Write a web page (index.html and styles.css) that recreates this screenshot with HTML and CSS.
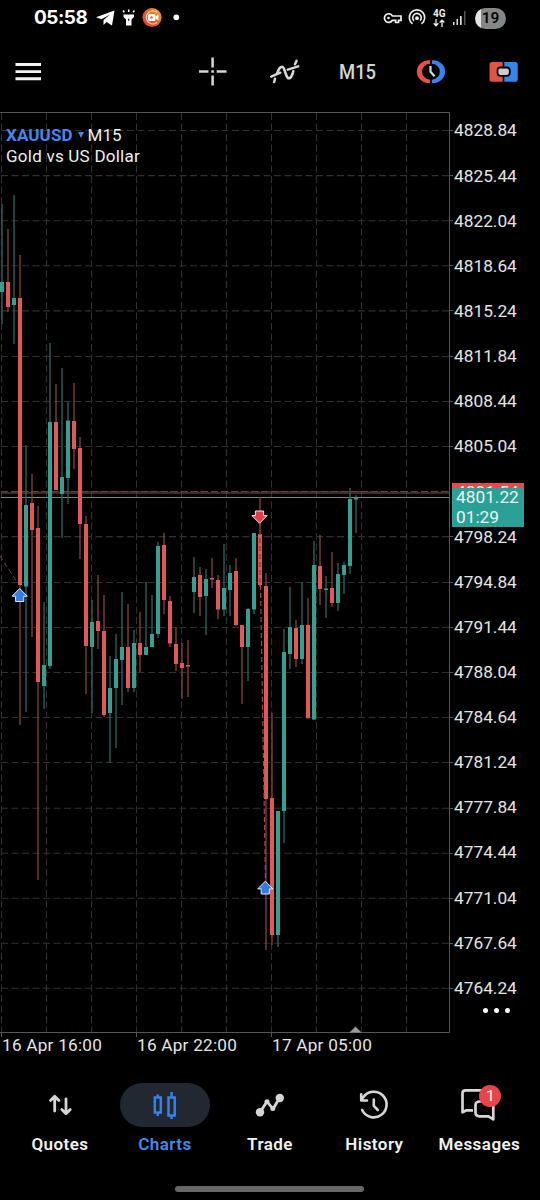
FILE: index.html
```html
<!DOCTYPE html>
<html lang="en">
<head>
<meta charset="utf-8">
<title>XAUUSD M15</title>
<link rel="stylesheet" href="styles.css">
</head>
<body>
<div class="app">
  <header class="status">
    <span class="clock">05:58</span>
    <svg class="status-left" width="90" height="36" viewBox="93 0 90 36">
      <path d="M96 17.3 114.5 10.5 112 25.5 106.5 22 103.5 25V20L110 14.5 101.5 19.3Z" fill="#fff"/>
      <path d="M123.500 14.500H134V17L131.500 19.500V25.500H126V19.500L123.500 17Z" fill="#fff"/>
      <path d="M128.700 9.500V12M123 10.500 124.300 12.300M134.400 10.500 133.100 12.300" stroke="#fff" stroke-width="1.500"/>
      <path d="M128.700 18.800V20.800" stroke="#000" stroke-width="1.200"/>
      <defs><linearGradient id="rec" x1="0" y1="1" x2="1" y2="0"><stop offset="0" stop-color="#e93427"/><stop offset=".5" stop-color="#ec6129"/><stop offset="1" stop-color="#e8b52c"/></linearGradient></defs>
      <circle cx="152" cy="17.500" r="9.600" fill="url(#rec)"/>
      <path d="M157 12.500A6.500 6.500 0 1 0 157 22.500" fill="none" stroke="#ffd9bd" stroke-width="1.200"/>
      <rect x="148" y="14" width="7.500" height="7" rx="1.500" fill="#fff"/>
      <path d="M155.500 16.500 158.500 14.500V20.500L155.500 18.500Z" fill="#fff"/>
      <circle cx="151.500" cy="17.500" r="1.300" fill="#ec6129"/>
      <circle cx="176.300" cy="17.300" r="2.900" fill="#fff"/>
    </svg>
    <div class="status-right">
      <svg width="44" height="36" viewBox="383 0 44 36" fill="none" stroke="#eee">
        <path d="M392.500 16H401V20.300H398.500V22.500H395.700V20.300H392.400A4.300 4.300 0 1 1 392.500 16Z" stroke-width="1.700"/>
        <circle cx="388.500" cy="18" r="1.300" fill="#eee" stroke="none"/>
        <path d="M412.500 23.800A7.700 7.700 0 1 1 421.500 23.800M414 20.800A4.300 4.300 0 1 1 420 20.800" stroke-width="1.600"/>
        <circle cx="417" cy="18.200" r="1.900" fill="#eee" stroke="none"/>
      </svg>
      <div class="net"><span>4G</span>
        <svg width="12" height="8" viewBox="0 0 12 8" fill="none" stroke="#eee" stroke-width="1.300"><path d="M3 0V6.500M.700 4.300 3 6.700 5.300 4.300M9 8V1.200M6.700 3.500 9 1.100 11.300 3.500"/></svg>
      </div>
      <svg width="15" height="16" viewBox="0 0 15 16"><path d="M1 12H2.500V15H1ZM4.500 9H6V15H4.500ZM8 6H9.700V15H8Z" fill="#ddd"/><path d="M12 1H13.500V15H12Z" fill="#555"/></svg>
      <span class="battery">19</span>
    </div>
  </header>

  <nav class="toolbar">
    <svg width="540" height="76" viewBox="0 36 540 76" class="tool-icons">
      <path d="M15.500 64.500H41M15.500 71.600H41M15.500 78.700H41" stroke="#f4f4f4" stroke-width="2.900"/>
      <path d="M212.600 57.500V67.500M212.600 75.500V85.500M199 71.500H208.500M216.700 71.500H226.500M211.300 71.500H213.900" stroke="#d8d8d8" stroke-width="2.500"/>
      <g fill="none" stroke="#d8d8d8" stroke-width="2.500" stroke-linecap="round">
        <path d="M271.200 76.600 280.300 72.700M287.800 69.600 298.200 66.400"/>
        <path d="M274.200 82 275 78.700M277 73.800C279.300 67 282.500 64.300 284.300 69.500L286 74.500C287.800 80 290.500 79.400 292.500 74L293.300 71.200M295 64.300 296.600 60.800"/>
      </g>
      <path d="M430.100 60.200H429A12.200 11.500 0 0 0 429 83.200H430.100V79.700A8 8 0 0 1 430.100 63.700Z" fill="#e25345"/>
      <path d="M431.800 60.200H432.900A12.200 11.500 0 0 1 432.900 83.200H431.800V79.700A8 8 0 0 0 431.800 63.700Z" fill="#3585ed"/>
      <path d="M430.500 66V71.800L434.600 76.200" fill="none" stroke="#d8d8d8" stroke-width="2.200"/>
      <path d="M492 62H502.700V81.800H492Q489.500 81.800 489.500 79.300V64.500Q489.500 62 492 62Z" fill="#e25345"/>
      <path d="M504.300 62H515.200Q517.700 62 517.700 64.500V79.300Q517.700 81.800 515.200 81.800H504.300Z" fill="#3585ed"/>
      <rect x="497.500" y="67.500" width="12.300" height="8.300" rx="3" fill="#ccc" stroke="#050505" stroke-width="1.800"/>
    </svg>
    <span class="period">M15</span>
  </nav>

  <main class="chart">
    <svg class="plot" width="453" height="926" viewBox="0 112 453 926">
      <g fill="none" stroke="#303030" stroke-width="1.100" stroke-dasharray="7 3.500">
        <path d="M1.500 113V1032M46.500 113V1032M91.500 113V1032M136.500 113V1032M181.500 113V1032M226.500 113V1032M271.500 113V1032M316.500 113V1032M361.500 113V1032M406.500 113V1032"/>
        <path d="M1 130.500H449M1 175.600H449M1 220.700H449M1 265.800H449M1 310.900H449M1 356.500H449M1 401.500H449M1 446.500H449M1 491.500H449M1 536.600H449M1 582.500H449M1 627.500H449M1 672.500H449M1 717.500H449M1 762.500H449M1 808.200H449M1 853.300H449M1 898.200H449M1 943.200H449M1 988.200H449"/>
      </g>
      <path d="M0 112.500H449.500V1032.500H0M1.500 1032V1037M136.500 1032V1037M271.500 1032V1037M449 130.500H453M449 175.500H453M449 220.500H453M449 265.500H453M449 310.500H453M449 356.500H453M449 401.500H453M449 446.500H453M449 536.500H453M449 582.500H453M449 627.500H453M449 672.500H453M449 717.500H453M449 762.500H453M449 808.500H453M449 853.500H453M449 898.500H453M449 943.500H453M449 988.500H453" fill="none" stroke="#565656"/>
      <path d="M349.500 1032.500 355.500 1026.500 361.500 1032.500Z" fill="#999"/>

      <!-- ask and bid levels -->
      <path d="M1 493H449" stroke="#8a4f49" stroke-width="1.200"/>
      <path d="M1 491.500H449" stroke="#65433f" stroke-dasharray="7 3"/>
      <path d="M1 497.500H449" stroke="#6f8d85" stroke-width="1"/>

      <!-- wicks -->
      <path fill="none" stroke="#2b685f" stroke-width="1.300" d="M2 204V324M14 195V344M26 445V712M44 602V709M50 343V669M62 368V538M68 402V504M92 600V713M110 656V763M116 634V748M122 592V705M134 630V692M146 582V655M152 595V647M158 542V638M194 557V613M206 569V635M224 544V616M230 565V616M248 608V681M254 533V614M278 811V947M284 629V843M290 587V669M302 582V664M314 541V720M326 576V618M338 563V611M344 562V594M350 488V574M356 495V533"/>
      <path fill="none" stroke="#84433e" stroke-width="1.300" d="M8 229V312M20 255V725M32 474V637M38 506V880M56 384V490M74 383V469M80 437V559M86 516V694M98 575V649M104 595V717M128 604V692M140 612V672M164 533V614M170 596V647M176 627V671M182 643V699M188 640V697M200 567V616M212 558V588M218 575V619M236 558V626M242 625V704M260 497V587M266 573V950M272 713V945M296 620V667M308 598V719M320 535V605M332 552V607"/>
      <!-- bodies -->
      <path fill="none" stroke="#35a092" stroke-width="4" d="M2 282V292M14 298V305M26 505V586.500M44 665V686M50 422V666M62 477V494M68 420.500V478M92 622V647M110 688V713M116 659V688M122 647V660M134 643V688M146 647V655M152 634V647M158 546V634M194 577V592M206 579V596M224 588V609.500M230 573V590M248 609V647M254 533V609.500M278 811V935M284 652V811M290 627V654M302 625V659M314 565V719.500M326 588.500V590M338 574V603M344 565V575M350 499V566M356 497V499.500"/>
      <path fill="none" stroke="#e2585a" stroke-width="4" d="M8 282V307M20 298V585M32 503V530M38 528V682M56 422V490M74 421V449M80 448V524M86 524V646M98 621V631M104 631V715M128 647V688M140 643V655M164 545V600M170 601V643.500M176 644V664M182 663V668M188 665V666.500M200 575V597M212 578V579.500M218 580V609.500M236 571V625M242 625V647M260 534V585M266 586V799M272 798V935M296 628V659M308 625V718M320 566V589M332 588V603"/>

      <!-- deals -->
      <path d="M0 556 17 582" stroke="#74463e" stroke-dasharray="5 3" fill="none"/>
      <path d="M260 522V585" stroke="#8f3436" stroke-width="1.200" stroke-dasharray="5 3"/>
      <path d="M260.500 585 265.500 882" stroke="#a04a43" stroke-width="1.200" stroke-dasharray="5 3"/>
      <g stroke="#e6edf8" stroke-width="1" stroke-linejoin="round">
        <path d="M19.700 588.500 27.300 596.200H23.800V601.500H15.600V596.200H12.100Z" fill="#347bea"/>
        <path d="M265.300 881.200 272.900 888.900H269.400V894H261.200V888.900H257.700Z" fill="#347bea"/>
        <path d="M259.500 523.200 251.900 515.600H255.400V511H263.600V515.600H267.100Z" fill="#e53e46"/>
      </g>
    </svg>
    <div class="prices">
      <span>4828.84</span><span>4825.44</span><span>4822.04</span><span>4818.64</span><span>4815.24</span><span>4811.84</span><span>4808.44</span><span>4805.04</span><span></span><span>4798.24</span><span>4794.84</span><span>4791.44</span><span>4788.04</span><span>4784.64</span><span>4781.24</span><span>4777.84</span><span>4774.44</span><span>4771.04</span><span>4767.64</span><span>4764.24</span>
      <div class="more"><i></i><i></i><i></i></div>
    </div>
    <div class="symbol">
      <div><b>XAUUSD</b><i class="caret"></i>M15</div>
      <div class="name">Gold vs US Dollar</div>
    </div>
    <div class="ask">4801.54</div>
    <div class="bid">4801.22<br>01:29</div>
  </main>
  <div class="times"><span>16 Apr 16:00</span><span>16 Apr 22:00</span><span>17 Apr 05:00</span></div>

  <footer class="tabs">
    <div class="tab"><div class="pill">
      <svg width="50" height="44" viewBox="35 1083 50 44" fill="none" stroke="#d6d6d6" stroke-width="2.800" stroke-linecap="round" stroke-linejoin="round"><path d="M54.700 1111V1096.500M50.500 1100.500 54.700 1096.300 58.900 1100.500M66 1099V1113M61.800 1109.500 66 1113.700 70.200 1109.500"/></svg>
    </div>Quotes</div>
    <div class="tab active"><div class="pill">
      <svg width="50" height="44" viewBox="140.500 1083 50 44" fill="none" stroke="#3681ee" stroke-width="2.500"><path d="M155.300 1097.500H161.300V1112.500H155.300ZM158.300 1094.500V1097M158.300 1113V1116M169 1097.500H175.200V1115.500H169ZM172.100 1092V1097M172.100 1116V1119"/></svg>
    </div>Charts</div>
    <div class="tab"><div class="pill">
      <svg width="50" height="44" viewBox="245.500 1083 50 44" fill="none" stroke="#d6d6d6" stroke-width="2.800"><path d="M260.500 1112.300 267.500 1101.500 273.500 1109 280.300 1097.500" stroke-linejoin="round"/><g fill="#d6d6d6" stroke="none"><circle cx="260.500" cy="1112.300" r="4.200"/><circle cx="267.500" cy="1101.800" r="2.500"/><circle cx="273.300" cy="1108.500" r="2.500"/><circle cx="280.300" cy="1098" r="4.200"/></g></svg>
    </div>Trade</div>
    <div class="tab"><div class="pill">
      <svg width="50" height="44" viewBox="349.500 1083 50 44" fill="none" stroke="#d6d6d6" stroke-width="2.600" stroke-linecap="round" stroke-linejoin="round"><path d="M362.700 1110A12.800 12.800 0 1 0 363.800 1097.200L361.700 1100M361.700 1094.300V1100.500H367.500M374.300 1099.500V1105.800L378.300 1110"/></svg>
    </div>History</div>
    <div class="tab"><div class="pill">
      <svg width="50" height="44" viewBox="455 1083 50 44" fill="none" stroke="#d6d6d6" stroke-width="2.700" stroke-linejoin="round"><path d="M484 1090.300H466.500Q463.500 1090.300 463.500 1093.300V1112.300L467.500 1110.300H474"/><path d="M481 1101.500H491Q494.300 1101.500 494.300 1104.500V1119.500L489.500 1116.300H480.500Q476.500 1116.300 476.500 1112.300V1105Q476.500 1101.500 481 1101.500Z"/></svg>
      <em class="badge">1</em>
    </div>Messages</div>
  </footer>
  <div class="home"></div>
</div>
</body>
</html>
```

FILE: styles.css
```css
* { box-sizing: border-box; }
body {
  margin: 0;
  background: #000;
  color: #e4e4e4;
  font-family: Roboto, "Liberation Sans", sans-serif;
}
svg { display: block; flex: none; }
.app { width: 540px; height: 1200px; overflow: hidden; background: #000; }

.status { height: 36px; display: flex; align-items: center; padding-left: 34px; }
.clock { width: 59px; font: 700 19px/36px Inter, Roboto, sans-serif; color: #fff; white-space: nowrap; letter-spacing: -0.5px; }
.status-right { display: flex; align-items: center; margin-left: 200px; }
.net { width: 19px; margin-left: 6px; display: flex; flex-direction: column; align-items: flex-start; font: 700 10px/9px Roboto, sans-serif; color: #eee; }
.net svg { margin-top: 1px; }
.battery {
  width: 31px; height: 21px; margin-left: 8px;
  border-radius: 11px;
  background: linear-gradient(90deg, #e4e4e4 19%, #878787 20%);
  color: #080808; font-size: 15.5px; font-weight: 600; line-height: 21px; text-align: center;
}

.toolbar { position: relative; height: 76px; }
.period { position: absolute; left: 339px; top: 24px; font-size: 20.5px; line-height: 24px; font-weight: 500; color: #d4d4d4; transform: scaleX(0.9); transform-origin: left; }

.chart { position: relative; display: flex; height: 926px; }
.prices { width: 87px; margin-top: -3.6px; }
.prices span { display: block; height: 45.13px; line-height: 45.13px; padding-left: 1px; font-size: 17.3px; white-space: nowrap; }
.more { display: flex; gap: 6px; margin-left: 30px; margin-top: -3px; }
.more i { width: 5px; height: 5px; border-radius: 50%; background: #fff; }
.symbol { position: absolute; left: 6px; top: 13px; font-size: 17px; line-height: 21px; color: #eee; white-space: nowrap; }
.symbol b { color: #4388ef; font-weight: 700; letter-spacing: 0.1px; }
.name { letter-spacing: 0.24px; }
.caret { display: inline-block; margin: 0 4px 3px 5px; border: 3px solid transparent; border-top: 6px solid #4388ef; border-bottom: 0; }
.ask, .bid { position: absolute; left: 452px; width: 72px; padding-left: 4px; font-size: 17.3px; color: #f0f0f0; }
.ask { top: 371px; height: 6px; line-height: 18px; background: #e34b50; overflow: hidden; }
.bid { top: 376px; height: 39px; line-height: 19.5px; background: #29a196; }

.times { display: flex; height: 40px; padding-left: 2px; font-size: 17.2px; line-height: 15px; letter-spacing: 0.23px; white-space: nowrap; }
.times span { width: 135px; }

.tabs { display: grid; grid-template-columns: 105px 105px 105px 105px 105px; padding: 5px 0 0 7.5px; height: 100px; }
.tab { display: flex; flex-direction: column; align-items: center; font-size: 17px; line-height: 20px; font-weight: 600; letter-spacing: 0.45px; color: #f1f1f1; }
.pill { position: relative; display: flex; justify-content: center; width: 90px; height: 44px; margin-bottom: 7px; border-radius: 22px; }
.tab:nth-child(n + 4) { position: relative; left: -0.6px; }
.active { color: #4589ee; }
.active .pill { background: #212832; }
.badge { position: absolute; left: 45px; top: 2px; width: 22px; height: 22px; border-radius: 50%; background: #e94549; color: #fff; font-size: 15px; font-style: normal; font-weight: 400; line-height: 22px; text-align: center; letter-spacing: 0; }
.home { width: 189px; height: 6px; margin: 8px 0 0 175px; border-radius: 3px; background: #686868; }
```
